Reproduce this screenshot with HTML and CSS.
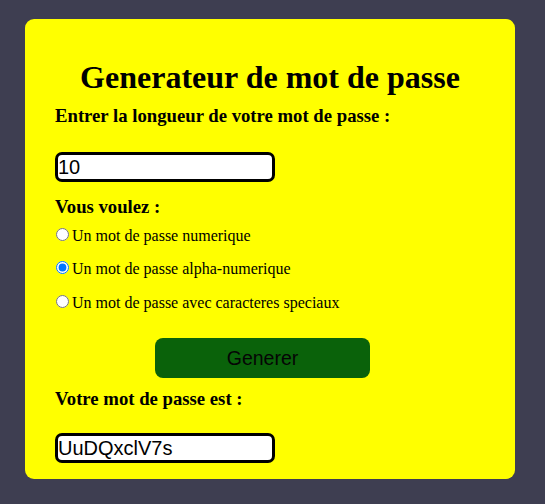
FILE: index.html
```html
<!DOCTYPE html>
<html lang="fr">
<head>
<meta charset="utf-8">
<title>Generateur de mot de passe</title>
<link rel="stylesheet" href="styles.css">
</head>
<body>
<main class="card">
  <h1 class="title">Generateur de mot de passe</h1>
  <label class="label label-len" for="len">Entrer la longueur de votre mot de passe :</label>
  <input class="field" id="len" type="text" value="10">
  <p class="label label-q">Vous voulez :</p>
  <div class="options">
    <label class="option"><input class="radio" type="radio" name="type">Un mot de passe numerique</label>
    <label class="option"><input class="radio" type="radio" name="type" checked>Un mot de passe alpha-numerique</label>
    <label class="option"><input class="radio" type="radio" name="type">Un mot de passe avec caracteres speciaux</label>
  </div>
  <div class="actions">
    <button class="btn" type="button">Generer</button>
  </div>
  <label class="label label-out" for="out">Votre mot de passe est :</label>
  <input class="field" id="out" type="text" value="UuDQxclV7s">
</main>
</body>
</html>
```
FILE: styles.css
```css
html, body {
  margin: 0;
  padding: 0;
  background: #3e3e51;
}
body {
  padding: 19px 0 25px 25px;
  font-family: "Liberation Serif", "Times New Roman", serif;
  color: #000;
}
.card {
  box-sizing: border-box;
  width: 490px;
  height: 460px;
  background: #ffff00;
  border-radius: 9px;
  padding: 40px 30px 0 30px;
  display: flex;
  flex-direction: column;
  align-items: flex-start;
}
.title {
  align-self: stretch;
  text-align: center;
  font-size: 32px;
  font-weight: bold;
  line-height: 37px;
  margin: 0 0 9px 0;
}
.label {
  display: block;
  font-size: 18.72px;
  font-weight: bold;
  line-height: 22px;
  margin: 0;
}
.label-len {
  margin-bottom: 25px;
}
.label-q {
  margin-top: 14px;
}
.label-out {
  margin: 10px 0 23px 0;
}
.field {
  box-sizing: border-box;
  width: 220px;
  height: 30px;
  border: 3px solid #000;
  border-radius: 7px;
  background: #fff;
  font-family: "Liberation Sans", Arial, sans-serif;
  font-size: 20px;
  padding: 0;
  margin: 0;
  color: #000;
  outline: none;
}
.options {
  display: flex;
  flex-direction: column;
  gap: 15px;
  margin-top: 9px;
}
.option {
  display: block;
  font-size: 16px;
  line-height: 18.4px;
}
.radio {
  margin: 0 3px 0 1px;
  width: 13px;
  height: 13px;
  vertical-align: baseline;
}
.actions {
  display: flex;
  margin: 26px 0 0 100px;
}
.btn {
  width: 215px;
  height: 40px;
  background: #0a620a;
  border: none;
  border-radius: 8px;
  font-family: "Liberation Sans", Arial, sans-serif;
  font-size: 19.5px;
  color: #050505;
  padding: 0;
}
```
